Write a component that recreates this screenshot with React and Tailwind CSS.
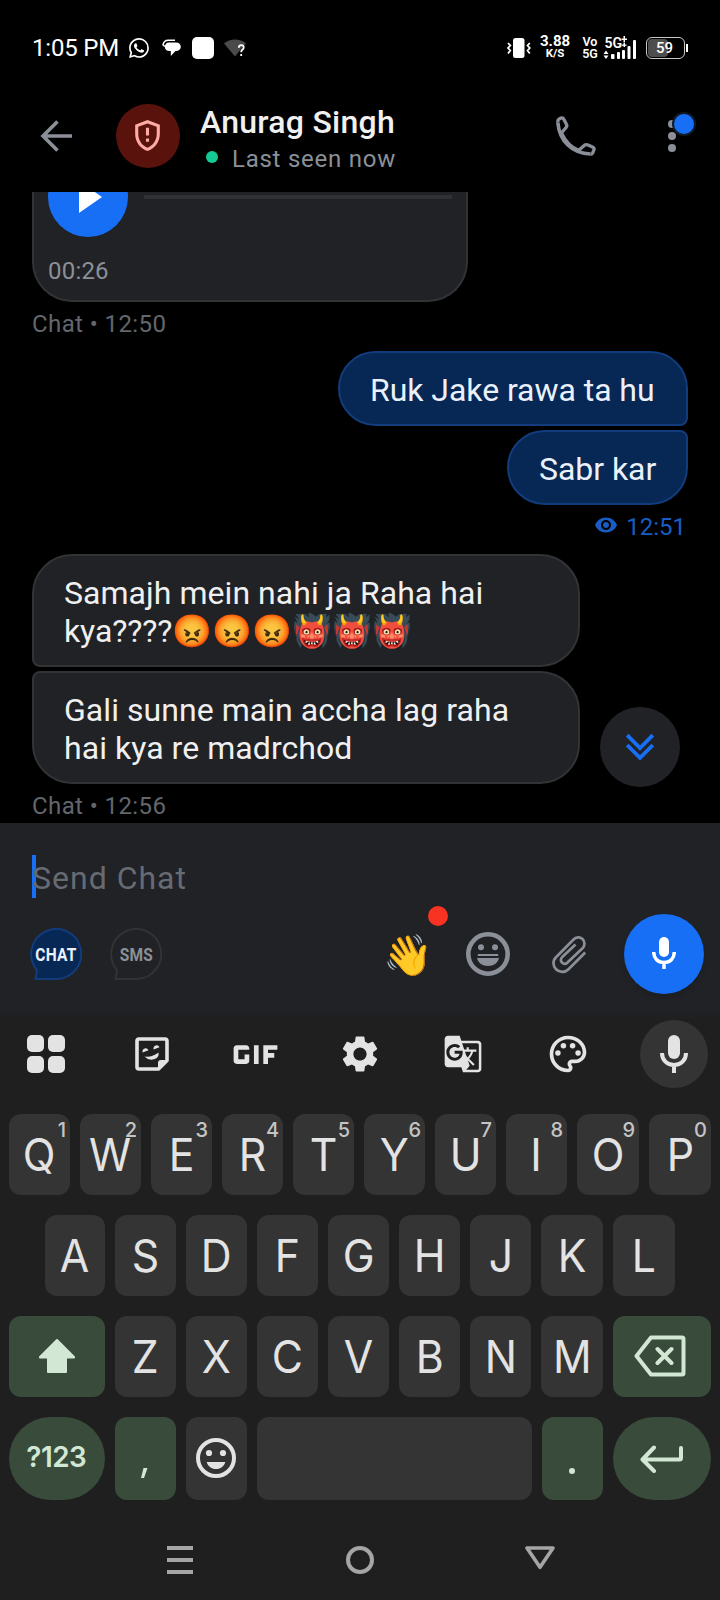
import React from "react";
import {
  MdSettings,
  MdVisibility,
  MdGTranslate,
  MdOutlinePalette,
  MdGif,
  MdOutlineGppMaybe,
} from "react-icons/md";
import { BsWhatsapp } from "react-icons/bs";

function StatusBar() {
  return (
    <div className="flex h-24 shrink-0 items-center justify-between pl-8 pr-8 text-white">
      <div className="flex items-center">
        <span className="w-[97px] text-2xl leading-none tracking-[-0.2px]">1:05 PM</span>
        <BsWhatsapp className="size-5" />
        <svg className="ml-[13px] h-[18px] w-[19px]" viewBox="0 0 19 18" fill="currentColor">
          <path d="M7 3.500h7c3 0 4.800 1.800 4.800 4.300s-2 4.200-4.800 4.200h-.5L8.800 17v-5H7.500C4.700 12 3 10.500 2.800 8 2.800 5.500 4.500 3.500 7 3.500z" />
          <path d="M1 6.200C1.300 3.200 3.500 1.200 6.500 1.200h6.500M0.500 5.500l2.500 2" fill="none" stroke="currentColor" strokeWidth="1.500" />
        </svg>
        <div className="ml-[11px] size-[22px] rounded-[5px] bg-white" />
        <svg className="ml-[10px] h-6 w-6" viewBox="0 0 24 24">
          <path d="M0 7.500C6 2 16 2 22 7.500L17 13l-6 7.500z" fill="#4a4a4a" />
          <path d="M14.800 11.800q0-2.600 2.500-2.600 2.400 0 2.400 2.300 0 1.300-1.400 2.300-1.100.8-1.100 2.400M17.200 18v2" fill="none" stroke="#fff" strokeWidth="1.800" />
        </svg>
      </div>
      <div className="flex items-center">
        <svg className="h-5 w-6" viewBox="0 0 24 20">
          <rect x="6" y="0" width="11.500" height="20" rx="2.500" fill="#fff" />
          <path d="M1 5l2.300 2.500-2.300 2.500 2.300 2.500-2.300 3M22.800 5l-2.300 2.500 2.300 2.500-2.300 2.500 2.300 3" fill="none" stroke="#fff" strokeWidth="1.800" />
        </svg>
        <div className="ml-[9px] flex w-[30px] flex-col items-center pb-[3px] font-bold">
          <span className="text-[15px] leading-[14px]">3.88</span>
          <span className="text-[11.5px] leading-[11px]">K/S</span>
        </div>
        <div className="ml-2.5 flex w-5 flex-col items-center text-[12.5px] font-semibold leading-3">
          <span>Vo</span>
          <span>5G</span>
        </div>
        <svg className="ml-[3px] h-6 w-[34px]" viewBox="0 0 34 24" fill="#fff">
          <text x="1.500" y="12" fontSize="14" fontWeight="600" fontFamily="Roboto, sans-serif">5G</text>
          <path d="M20.500 0h1.500v2.500h2V4h-2v2.500h-1.500V4h-2V2.500h2zM20.500 7h1.500v4h-1.500zM18.500 8.500h5v1.300h-5z" />
          <path d="M0.500 18l2.500-3.500L5.500 18zM0.500 19.500h5L3 23z" />
          <rect x="8" y="18" width="3.500" height="5" rx="1" />
          <rect x="14" y="16" width="3" height="7" rx="1" />
          <rect x="19" y="14" width="3" height="9" rx="1" />
          <rect x="24.500" y="10" width="3" height="13" rx="1" />
          <rect x="30" y="4" width="3" height="19" rx="1" />
        </svg>
        <div className="ml-[9px] flex h-[22px] w-[39px] items-center rounded-md border-[1.5px] border-[#c8c8c8] p-px">
          <div className="relative flex h-full w-[20px] items-center rounded-[4px] bg-[#4d4d4d]">
            <span className="absolute left-2 text-[15px] font-medium leading-none">59</span>
          </div>
        </div>
        <div className="ml-px h-2 w-0.5 bg-white" />
      </div>
    </div>
  );
}

function PhoneIcon() {
  return (
    <svg className="size-10" viewBox="0 0 40 40" fill="none" stroke="#8b9098" strokeWidth="3.300" strokeLinejoin="round">
      <path d="M1.800 6.500C3.500 25 16 37.500 34.500 38" strokeWidth="3.600" />
      <path d="M4.500 18L10.300 11.200Q11.300 9.700 10.300 8L7.800 3.200Q6.900 1.400 5 2L3.200 2.900Q1.500 4 1.800 6.500" />
      <path d="M22.500 34.500L28.500 29.200Q30 28.200 32 29L36.500 31Q38.600 32 38 33.700L36.800 36.700Q36 38.200 34.500 38" />
      <path d="M5.500 17.500C9 25 15 31.500 22.500 34.500" strokeWidth="3.800" />
    </svg>
  );
}

function Header() {
  return (
    <div className="flex h-24 shrink-0 items-start">
      <div className="flex h-20 flex-1 items-center pl-10">
        <svg className="h-8 w-8" viewBox="0 0 32 32" fill="none" stroke="#8b9098" strokeWidth="3.600">
          <path d="M32 16H3M17.500 1.500L3 16l14.500 14.500" />
        </svg>
        <div className="ml-11 flex size-16 items-center justify-center rounded-full bg-[#5a130c] text-[#ffaaa3]">
          <MdOutlineGppMaybe className="-ml-px -mt-px size-[37px]" />
        </div>
        <div className="ml-5 flex flex-col pt-[9px]">
          <div className="text-[32px] font-medium leading-[36px] tracking-[0.25px] text-[#f0f0f0]">Anurag Singh</div>
          <div className="flex h-[38px] items-center pl-[6px]">
            <div className="mb-1 size-3 rounded-full bg-[#14ca94]" />
            <div className="ml-[14px] text-2xl tracking-[0.75px] text-[#8b9098]">Last seen now</div>
          </div>
        </div>
      </div>
      <div className="flex h-20 items-center pr-11">
        <PhoneIcon />
        <div className="relative ml-[72px] flex w-2 flex-col gap-1">
          <div className="size-2 rounded-full bg-[#8b9098]" />
          <div className="size-2 rounded-full bg-[#8b9098]" />
          <div className="size-2 rounded-full bg-[#8b9098]" />
          <div className="absolute -top-2 left-1 size-6 rounded-full border-2 border-[#111a26] bg-[#176ff5]" />
        </div>
      </div>
    </div>
  );
}

function Stamp({ children }) {
  return <div className="mb-[5px] h-11 shrink-0 text-2xl leading-[44px] tracking-[0.4px] text-[#62666d]">{children}</div>;
}

function Messages() {
  const incoming =
    "w-[548px] shrink-0 border-2 border-[#313335] bg-[#202226] pt-[18px] pb-[15px] pl-[30px] text-[32px] leading-[38px] tracking-[0.05px] text-[#f0f0f0]";
  const outgoing =
    "h-[75px] shrink-0 border-2 border-[#123c7c] bg-[#072755] pt-[18px] pl-[30px] text-[32px] leading-[38px] tracking-[-0.05px] text-[#eaf1fb]";
  return (
    <div className="relative flex h-[631px] shrink-0 flex-col items-start overflow-hidden px-8">
      <div className="flex h-[110px] w-[436px] shrink-0 flex-col rounded-b-[40px] border-2 border-t-0 border-[#313335] bg-[#202226] px-[14px]">
        <div className="-mt-[35px] flex h-20 items-center">
          <div className="flex size-20 items-center justify-center rounded-full bg-[#176ff5]">
            <svg className="ml-1 h-8 w-6" viewBox="0 0 24 32" fill="#fff"><path d="M1 0l23 16L1 32z" /></svg>
          </div>
          <div className="ml-4 h-1 w-[308px] bg-[#2f3133]" />
        </div>
        <div className="mt-[17px] text-2xl leading-[34px] tracking-[0.2px] text-[#8b9098]">00:26</div>
      </div>
      <Stamp>Chat • 12:50</Stamp>
      <div className={`${outgoing} w-[350px] self-end rounded-[38px] rounded-br-lg`}>
        <span className="whitespace-nowrap">Ruk Jake rawa ta hu</span>
      </div>
      <div className={`${outgoing} mt-1 w-[181px] self-end rounded-[38px] rounded-tr-lg`}>Sabr kar</div>
      <div className="mb-[5px] flex h-11 shrink-0 items-center gap-2 self-end pr-0.5 text-2xl text-[#195dc4]">
        <MdVisibility className="mb-1 size-6" />
        <span>12:51</span>
      </div>
      <div className={`${incoming} rounded-[40px] rounded-bl-lg`}>
        <div className="whitespace-nowrap">Samajh mein nahi ja Raha hai</div>
        <div className="h-[38px] whitespace-nowrap tracking-[-0.1px]">kya????😡😡😡👹👹👹</div>
      </div>
      <div className={`${incoming} mt-1 rounded-[40px] rounded-tl-lg`}>
        <div className="whitespace-nowrap">Gali sunne main accha lag raha</div>
        <div>hai kya re madrchod</div>
      </div>
      <Stamp>Chat • 12:56</Stamp>
      <div className="absolute left-[600px] top-[515px] flex size-20 items-center justify-center rounded-full bg-[#202226]">
        <svg className="h-7 w-7" viewBox="0 0 28 28" fill="none" stroke="#176ff5" strokeWidth="3.800">
          <path d="M1.200 2.200L14 15 26.800 2.200M1.200 12L14 24.800 26.800 12" />
        </svg>
      </div>
    </div>
  );
}

function ModeBubble({ label, box, shape, stroke }) {
  return (
    <div className={`relative flex size-[52px] items-center justify-center ${box}`}>
      <svg className="absolute inset-0 size-[52px]" viewBox="0 0 52 52">
        <path d="M5.500 51H26A25 25 0 1 0 7 42z" className={shape} stroke={stroke} strokeWidth="2" />
      </svg>
      <span className="relative mt-[2px] inline-block scale-x-[0.86] text-[18px] font-bold leading-none tracking-[0.3px]">{label}</span>
    </div>
  );
}

function Composer() {
  return (
    <div className="flex h-[186px] shrink-0 flex-col bg-[#202226]">
      <div className="relative mt-8 flex h-[43px] items-center pl-8">
        <div className="h-[43px] w-1 bg-[#176ff5]" />
        <span className="relative -ml-1 mt-[3px] text-[32px] leading-none tracking-[1px] text-[#666b73]">Send Chat</span>
      </div>
      <div className="mt-4 flex h-20 items-center pl-[30px] pr-4">
        <ModeBubble label="CHAT" box="text-[#eaf1fb]" shape="fill-[#072755]" stroke="#123c7c" />
        <ModeBubble label="SMS" box="ml-7 text-[#8b9098]" shape="fill-none" stroke="#313335" />
        <div className="relative ml-[223px] flex size-12 items-center justify-center">
          <span className="-ml-0.5 mt-[3px] text-[40px] leading-none">👋</span>
          <div className="absolute -top-[24px] left-[43px] size-5 rounded-full bg-[#f93322]" />
        </div>
        <svg className="ml-[33px] size-11" viewBox="0 0 44 44" fill="none">
          <circle cx="22" cy="22" r="19.700" stroke="#8b9098" strokeWidth="4.600" />
          <circle cx="15" cy="15.200" r="3" fill="#8b9098" />
          <circle cx="29" cy="15.200" r="3" fill="#8b9098" />
          <path d="M11.800 23h20.400" stroke="#8b9098" strokeWidth="2" />
          <path d="M11 26h22c-1 5-5.500 8-11 8s-10-3-11-8z" fill="#8b9098" />
        </svg>
        <svg className="ml-[41px] h-10 w-9" viewBox="0 0 36 40" fill="none" stroke="#8b9098" strokeWidth="2.700">
          <path d="M34.200 18.500L17.500 35.200C13.500 39.200 8 38.300 5 35.300S1.300 27 5 23.300L22.500 5.500C25 2.800 29 2.600 31.500 5s2.700 6.500 0 9.200L16.500 28.500C14.800 30.200 12.500 30 11 28.600s-1.500-3.700 0-5.300L24.500 10.500" />
        </svg>
        <div className="ml-[37px] flex size-20 shrink-0 items-center justify-center rounded-full bg-[#176ff5] text-white shadow-md">
          <svg className="mb-0.5 h-8 w-6" viewBox="0 0 24 32">
            <rect x="7" y="0" width="10" height="20" rx="5" fill="#fff" />
            <path d="M1.700 15C1.700 21.500 6 25.500 12 25.500S22.300 21.500 22.300 15M12 25.500V32" fill="none" stroke="#fff" strokeWidth="3.500" />
          </svg>
        </div>
      </div>
    </div>
  );
}

function Toolbar() {
  return (
    <div className="grid h-[105px] grid-cols-[92px_120px_88px_120px_88px_119px_93px] items-start pt-[11px] text-[#e3e3e3]">
      <div className="flex h-[68px] items-center justify-center">
        <div className="grid grid-cols-2 gap-1">
          <div className="size-[17px] rounded-[5px] bg-[#e3e3e3]" />
          <div className="size-[17px] rounded-[5px] bg-[#e3e3e3]" />
          <div className="size-[17px] rounded-[5px] bg-[#e3e3e3]" />
          <div className="size-[17px] rounded-[5px] bg-[#e3e3e3]" />
        </div>
      </div>
      <div className="flex h-[68px] items-center justify-center">
        <svg className="size-[34px]" viewBox="0 0 34 34">
          <path d="M4 2h26q2 0 2 2v19.500L23.500 32H4q-2 0-2-2V4q0-2 2-2z" fill="none" stroke="#e3e3e3" strokeWidth="3.600" strokeLinejoin="round" />
          <path d="M23 33v-7q0-3 3-3h7z" fill="#e3e3e3" />
          <path d="M7.500 15.500a3.200 3.600 0 0 1 6-2.200zM18.500 12.500a3.200 3.600 0 0 1 6-2.200zM9.500 19.500q8 1 14-4 1 5-4.500 6.800-5.500 1.500-9.500-2.800z" fill="#e3e3e3" />
        </svg>
      </div>
      <div className="flex h-[68px] items-center justify-center">
        <MdGif className="-ml-0.5 size-[75px] shrink-0" />
      </div>
      <div className="flex h-[68px] items-center justify-center">
        <MdSettings className="-ml-px size-[44px]" />
      </div>
      <div className="flex h-[68px] items-center justify-center">
        <MdGTranslate className="-ml-0.5 size-10" />
      </div>
      <div className="flex h-[68px] items-center justify-center">
        <MdOutlinePalette className="size-[44px]" />
      </div>
      <div className="ml-[13px] flex size-[68px] items-center justify-center rounded-full bg-[#343434]">
        <svg className="h-[38px] w-7" viewBox="0 0 28 38">
          <rect x="8" y="0" width="12" height="24" rx="6" fill="#e3e3e3" />
          <path d="M2 18C2 25 7 30 14 30S26 25 26 18M14 30V38" fill="none" stroke="#e3e3e3" strokeWidth="4" />
        </svg>
      </div>
    </div>
  );
}

function Key({ label, hint }) {
  return (
    <div className="relative flex h-full items-center justify-center rounded-xl bg-[#343434] text-[45px] leading-none text-[#e3e3e3]">
      <span className="inline-block scale-x-[0.95]">{label}</span>
      {hint && <span className="absolute right-1 top-[6px] text-[20px] font-medium leading-none text-[#c4c4c4]">{hint}</span>}
    </div>
  );
}

function Keyboard() {
  return (
    <div className="flex h-[591px] shrink-0 flex-col bg-[#1f1f1f] font-[Inter,sans-serif]">
      <div className="bg-linear-to-b from-[#202226] from-0% to-[#1f1f1f] to-10%">
        <Toolbar />
      </div>
      <div className="flex flex-col gap-5 px-[9px]">
        <div className="grid h-[81px] grid-cols-[repeat(8,61px)_62px_62px] gap-2.5">
          {[..."QWERTYUIOP"].map((c, i) => (
            <Key key={c} label={c} hint={String((i + 1) % 10)} />
          ))}
        </div>
        <div className="grid h-[81px] grid-cols-[60px_repeat(6,61px)_62px_62px] gap-2.5 pl-9">
          {[..."ASDFGHJKL"].map((c) => (
            <Key key={c} label={c} />
          ))}
        </div>
        <div className="grid h-[81px] grid-cols-[96px_repeat(6,61px)_62px_98px] gap-2.5">
          <div className="flex items-center justify-center rounded-xl bg-[#394b3b]">
            <svg className="-mt-px h-[34px] w-9" viewBox="0 0 36 34" fill="#d2e8d4" stroke="#d2e8d4" strokeWidth="2" strokeLinejoin="round">
              <path d="M18 1L1 18v.5h8V33h18V18.500h8V18z" />
            </svg>
          </div>
          {[..."ZXCVBNM"].map((c) => (
            <Key key={c} label={c} />
          ))}
          <div className="flex items-center justify-center rounded-xl bg-[#394b3b]">
            <svg className="-ml-1 -mt-0.5 h-[42px] w-[52px]" viewBox="0 0 52 42" fill="none" stroke="#d2e8d4" strokeWidth="4" strokeLinejoin="round" strokeLinecap="round">
              <path d="M17 2.500H48q1.500 0 1.500 1.500V38q0 1.500-1.500 1.500H17L2.500 21zM23.500 14l14 14M37.500 14l-14 14" />
            </svg>
          </div>
        </div>
        <div className="grid h-[83px] grid-cols-[96px_61px_61px_275px_61px_98px] gap-2.5 text-[#d2e8d4]">
          <div className="flex items-center justify-center rounded-[42px] bg-[#394b3b] pb-[3px] pr-0.5 text-[29px] font-semibold tracking-[-0.5px]">
            <span className="inline-block scale-x-[0.96]">?123</span>
          </div>
          <div className="flex items-center justify-center rounded-xl bg-[#394b3b]">
            <svg className="-ml-1 mt-[29px] h-3 w-2" viewBox="0 0 8 12" fill="#d2e8d4"><path d="M3.500 1H7.500L4 11H1z" /></svg>
          </div>
          <div className="flex items-center justify-center rounded-xl bg-[#343434]">
            <svg className="-ml-px -mt-px size-10" viewBox="0 0 40 40">
              <circle cx="20" cy="20" r="18" fill="none" stroke="#e3e3e3" strokeWidth="4" />
              <circle cx="13" cy="15" r="3.100" fill="#e3e3e3" />
              <circle cx="27" cy="15" r="3.100" fill="#e3e3e3" />
              <path d="M10.700 24h18.600c-1.200 4.300-4.500 7-9.300 7s-8.100-2.700-9.300-7z" fill="#e3e3e3" />
            </svg>
          </div>
          <div className="rounded-xl bg-[#343434]" />
          <div className="flex items-center justify-center rounded-xl bg-[#394b3b]">
            <div className="-ml-0.5 mt-6 size-[6px] rounded-full bg-[#d2e8d4]" />
          </div>
          <div className="flex items-center justify-center rounded-[42px] bg-[#394b3b]">
            <svg className="h-7 w-11" viewBox="0 0 44 28" fill="none" stroke="#d2e8d4" strokeWidth="4" strokeLinejoin="round" strokeLinecap="round">
              <path d="M41 3v10q0 1.500-1.500 1.500H3M14 2.500L2.500 14.500l11.500 11.500" />
            </svg>
          </div>
        </div>
      </div>
      <div className="mt-[46px] flex items-start px-[165px]">
        <div className="ml-0.5 flex w-[26px] flex-col gap-2">
          <div className="h-1 bg-[#a5a5a5]" />
          <div className="h-1 bg-[#a5a5a5]" />
          <div className="h-1 bg-[#a5a5a5]" />
        </div>
        <div className="ml-[153px] size-7 rounded-full border-4 border-[#a5a5a5]" />
        <svg className="ml-[151px] h-6 w-[30px]" viewBox="0 0 30 24" fill="none" stroke="#a5a5a5" strokeWidth="3.600" strokeLinejoin="round">
          <path d="M2 2h26L15 21.300z" />
        </svg>
      </div>
    </div>
  );
}

export default function App() {
  return (
    <div className="flex h-[1600px] w-[720px] flex-col overflow-hidden bg-black font-[Roboto,sans-serif]">
      <StatusBar />
      <Header />
      <Messages />
      <Composer />
      <Keyboard />
    </div>
  );
}
